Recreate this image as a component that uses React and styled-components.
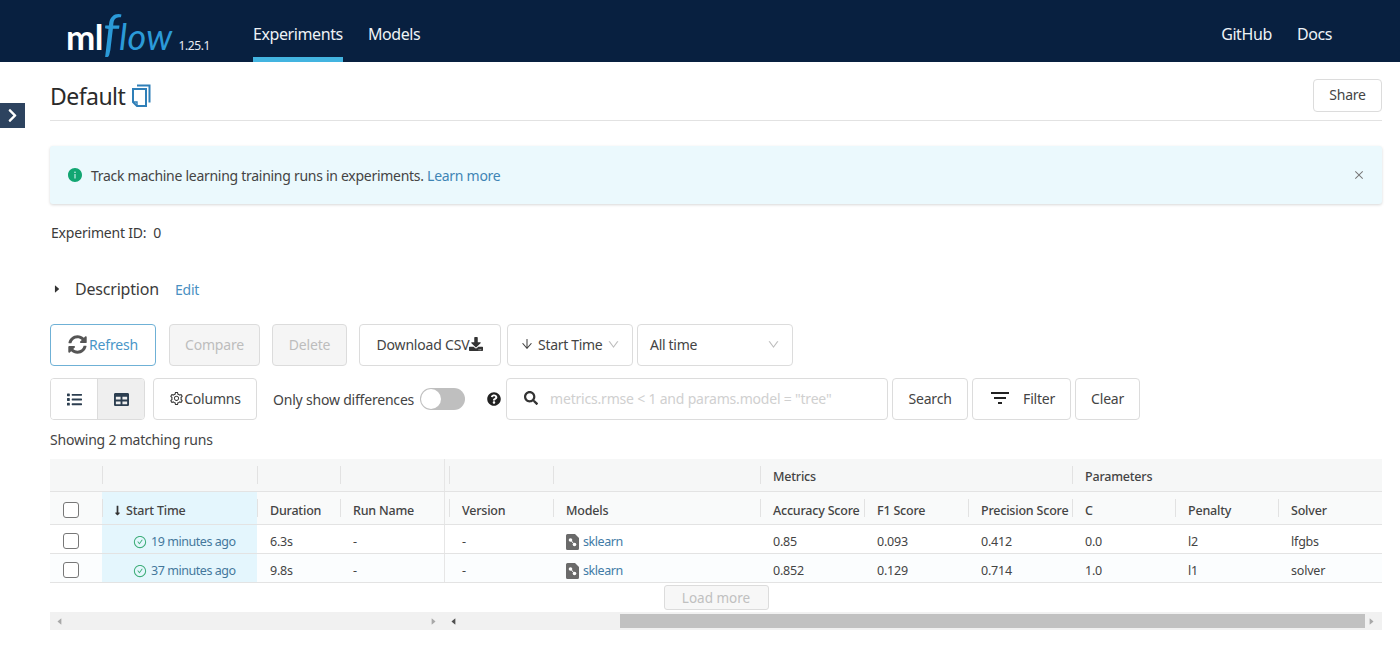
import React from "react";
import styled, { createGlobalStyle } from "styled-components";
import {
  AiFillCaretLeft,
  AiFillCaretRight,
  AiFillInfoCircle,
  AiOutlineArrowDown,
  AiOutlineCheckCircle,
  AiOutlineClose,
  AiOutlineDown,
  AiOutlineSetting,
} from "react-icons/ai";
import {
  FaChevronRight,
  FaDownload,
  FaList,
  FaLongArrowAltDown,
  FaQuestionCircle,
  FaSearch,
  FaSyncAlt,
  FaTable,
} from "react-icons/fa";
import { MdFilterList } from "react-icons/md";

const COLUMNS = "52px 155px 83px 109px 104px 207px 104px 104px 104px 103px 103px 104px";

const GlobalStyle = createGlobalStyle`
  html, body { margin: 0; background: #fff; }
  body {
    font-family: "Noto Sans", "Open Sans", sans-serif;
    font-size: 14px;
    color: #333;
    overflow: hidden;
  }
  * { box-sizing: border-box; }
`;

const Page = styled.div`
  position: relative;
  width: 1400px;
  height: 646px;
  overflow: hidden;
`;

const Header = styled.header`
  height: 62px;
  background: #082040;
  display: flex;
  align-items: stretch;
  padding: 0 67px 0 66px;
  color: #e8edf3;
`;

const Logo = styled.div`
  display: flex;
  align-items: baseline;
  width: 187px;
  padding-top: 1px;
  line-height: 60px;
`;
const LogoMl = styled.span`
  font-family: "Lato", sans-serif;
  font-size: 35px;
  font-weight: 700;
  color: #fff;
  letter-spacing: -0.5px;
`;
const LogoF = styled.span`
  font-family: "Lato", sans-serif;
  font-size: 50px;
  font-style: italic;
  color: #2b9ad8;
`;
const LogoFlow = styled.span`
  font-family: "Lato", sans-serif;
  font-size: 36px;
  font-style: italic;
  color: #2b9ad8;
  letter-spacing: 0.3px;
`;
const Version = styled.span`
  font-size: 12px;
  margin-left: 6px;
  letter-spacing: -0.4px;
`;

const NavItem = styled.a`
  display: flex;
  align-items: center;
  height: 62px;
  padding-top: 11px;
  margin-right: ${(p) => p.$gap || 25}px;
  font-size: 16px;
  letter-spacing: -0.4px;
  color: #eef2f6;
  border-bottom: 5px solid ${(p) => (p.$active ? "#43b4e0" : "transparent")};
`;
const Spacer = styled.div`
  flex: 1;
`;

const SideToggle = styled.button`
  position: absolute;
  left: 0;
  top: 103px;
  width: 25px;
  height: 25px;
  border: 0;
  padding: 0;
  background: #2d435f;
  color: #fff;
  display: flex;
  align-items: center;
  justify-content: center;
  font-size: 15px;
`;

const Main = styled.main`
  padding: 0 18px 0 50px;
`;

const TitleRow = styled.div`
  height: 59px;
  display: flex;
  align-items: flex-end;
  justify-content: space-between;
  padding-bottom: 8px;
  border-bottom: 1px solid #e2e2e2;
`;
const Title = styled.h1`
  margin: 0;
  display: flex;
  align-items: center;
  gap: 6px;
  font-size: 23px;
  font-weight: 400;
  line-height: 32px;
  color: #2a2a2a;
  height: 32px;
  letter-spacing: -0.55px;
`;

const Btn = styled.button`
  height: ${(p) => p.$h || 42}px;
  width: ${(p) => p.$w}px;
  flex: none;
  display: inline-flex;
  align-items: center;
  justify-content: center;
  gap: ${(p) => p.$iconGap || 0}px;
  padding: 0 0 2px;
  font: inherit;
  letter-spacing: -0.2px;
  color: ${(p) => (p.$disabled ? "#bdbdbd" : p.$primary ? "#4a96c8" : "#444")};
  background: ${(p) => (p.$disabled ? "#f5f5f5" : "#fff")};
  border: 1px solid ${(p) => (p.$primary ? "#6fb1d6" : "#dcdcdc")};
  border-radius: 4px;
`;

const Alert = styled.div`
  margin-top: 25px;
  height: 58px;
  display: flex;
  align-items: center;
  padding: 0 17px;
  gap: 8px;
  background: #ebf9fd;
  border-radius: 3px;
  box-shadow: 0 1px 3px rgba(0, 0, 0, 0.16);
  color: #444;
  letter-spacing: -0.28px;
`;
const AlertText = styled.span`
  flex: 1;
`;
const Link = styled.a`
  color: #3f85b5;
`;

const Meta = styled.div`
  margin: 19px 0 0 1px;
  line-height: 20px;
  letter-spacing: -0.2px;
  color: #3b3b3b;
`;

const Description = styled.div`
  margin-top: 34px;
  display: flex;
  align-items: center;
  height: 24px;
  padding-left: 2px;
`;
const DescriptionLabel = styled.span`
  font-size: 16px;
  margin: 0 16px 0 13px;
  letter-spacing: -0.2px;
  color: #3b3b3b;
`;
const EditLink = styled(Link)`
  font-size: 14px;
  color: #4a90c2;
  letter-spacing: -0.2px;
`;

const Toolbar = styled.div`
  display: flex;
  align-items: center;
  margin-top: ${(p) => p.$top}px;
`;
const Gap = styled.div`
  width: ${(p) => p.$w}px;
  flex: none;
`;

const SelectBox = styled.div`
  height: 42px;
  width: ${(p) => p.$w}px;
  flex: none;
  display: flex;
  align-items: center;
  padding: 0 12px 2px;
  gap: 4px;
  border: 1px solid #dcdcdc;
  border-radius: 4px;
  color: #444;
  letter-spacing: -0.3px;
  white-space: nowrap;
`;
const Chevron = styled(AiOutlineDown)`
  margin-left: auto;
  flex: none;
  font-size: 13px;
  color: #bdbdbd;
`;

const ViewToggle = styled.div`
  display: flex;
  width: 95px;
  height: 42px;
  flex: none;
  border: 1px solid #dcdcdc;
  border-radius: 4px;
  overflow: hidden;
`;
const ViewOption = styled.div`
  flex: 1;
  display: flex;
  align-items: center;
  justify-content: center;
  color: #2c3e50;
  font-size: 15px;
  background: ${(p) => (p.$active ? "#efefef" : "#fff")};
  border-left: ${(p) => (p.$active ? "1px solid #dcdcdc" : "0")};
`;

const SwitchLabel = styled.span`
  letter-spacing: -0.2px;
  color: #444;
  white-space: nowrap;
`;
const Switch = styled.div`
  width: 45px;
  height: 22px;
  flex: none;
  border-radius: 11px;
  background: #bfbfbf;
  display: flex;
  align-items: center;
  padding-left: 1px;
`;
const SwitchKnob = styled.div`
  width: 20px;
  height: 20px;
  border-radius: 50%;
  background: #fff;
`;
const HelpIcon = styled(FaQuestionCircle)`
  flex: none;
  color: #222;
  font-size: 14px;
`;

const SearchBox = styled.div`
  width: 382px;
  height: 42px;
  flex: none;
  display: flex;
  align-items: center;
  gap: 12px;
  padding: 0 0 2px 17px;
  border: 1px solid #dcdcdc;
  border-radius: 4px;
  color: #333;
  font-size: 14px;
`;
const Placeholder = styled.span`
  color: #d0d0d0;
  letter-spacing: -0.2px;
  white-space: nowrap;
`;

const Matching = styled.div`
  margin-top: 10px;
  line-height: 20px;
  letter-spacing: -0.2px;
  color: #444;
`;

const Table = styled.div`
  margin-top: 9px;
  width: 1332px;
  font-size: 12.5px;
  letter-spacing: -0.2px;
`;
const Row = styled.div`
  position: relative;
  display: grid;
  grid-template-columns: ${COLUMNS};
  height: ${(p) => p.$h}px;
  background: ${(p) => p.$bg || "#fff"};
  border-bottom: 1px solid #e3e3e3;
`;
const HeadCell = styled.div`
  position: relative;
  display: flex;
  align-items: center;
  gap: 3px;
  padding: ${(p) => (p.$group ? 3 : 5)}px 0 0 ${(p) => (p.$sorted ? 10 : 13)}px;
  font-weight: 500;
  color: #444;
  white-space: nowrap;
  background: ${(p) => (p.$sorted ? "#e4f6fd" : "transparent")};
  &::before {
    content: "";
    display: ${(p) => (p.$plain ? "none" : "block")};
    position: absolute;
    left: 0;
    top: 7px;
    bottom: 7px;
    width: 1px;
    background: #e2e2e2;
  }
`;
const CheckCell = styled.div`
  display: flex;
  align-items: center;
  padding: 3px 0 0 13px;
`;
const Checkbox = styled.div`
  width: 16px;
  height: 16px;
  border: 1px solid #777;
  border-radius: 3px;
  background: #fff;
`;
const Cell = styled.div`
  display: flex;
  align-items: center;
  gap: 4px;
  padding: 5px 0 0 13px;
  white-space: nowrap;
  color: #444;
`;
const TimeCell = styled(Cell)`
  background: #e4f6fd;
  padding-left: 31px;
  color: #44789c;
  letter-spacing: -0.45px;
`;
const OkIcon = styled(AiOutlineCheckCircle)`
  color: #3fae7a;
  font-size: 14px;
`;
const ModelLink = styled(Link)`
  color: #3f7ba6;
  letter-spacing: -0.45px;
`;
const PinnedEdge = styled.div`
  position: absolute;
  left: 394px;
  top: 0;
  bottom: 0;
  width: 1px;
  background: #e6e6e6;
`;

const LoadRow = styled.div`
  height: 29px;
  display: flex;
  justify-content: center;
  align-items: center;
`;
const LoadMore = styled.button`
  width: 105px;
  height: 25px;
  padding: 0;
  font: inherit;
  font-size: 13.5px;
  color: #c0c0c0;
  background: #f7f7f7;
  border: 1px solid #dcdcdc;
  border-radius: 3px;
`;

const Scrollbars = styled.div`
  display: flex;
  height: 18px;
  background: #f1f1f1;
  color: #a0a0a0;
  font-size: 9px;
`;
const ScrollTrack = styled.div`
  width: ${(p) => p.$w}px;
  display: flex;
  align-items: center;
  padding: 0 6px 0 5px;
  justify-content: space-between;
`;
const Thumb = styled.div`
  flex: none;
  width: 745px;
  height: 14px;
  background: #c1c1c1;
  margin-left: 160px;
`;
const TrackArrow = styled.span`
  display: flex;
  color: ${(p) => (p.$dark ? "#505050" : "#a8a8a8")};
`;

const CopyIcon = () => (
  <svg width="20" height="24" viewBox="0 0 20 24" fill="none" stroke="#2f7fb8" strokeWidth="2">
    <path d="M6 1.5h12.5v17" />
    <path d="M2 5h13v17H6l-4-4z" />
    <path d="M2 18h4v4" strokeWidth="1.4" />
  </svg>
);

const ModelIcon = () => (
  <svg width="13" height="16" viewBox="0 0 13 16">
    <path d="M1.5 0H9l4 4v10.5a1.5 1.5 0 0 1-1.5 1.5h-10A1.5 1.5 0 0 1 0 14.5v-13A1.5 1.5 0 0 1 1.5 0z" fill="#6a6a6a" />
    <circle cx="4.5" cy="6" r="1.8" fill="#fff" />
    <circle cx="8.5" cy="10.5" r="1.8" fill="#fff" />
    <path d="M5.5 7l2 2.5" stroke="#fff" strokeWidth="1" />
  </svg>
);

const runs = [
  { time: "19 minutes ago", duration: "6.3s", acc: "0.85", f1: "0.093", precision: "0.412", c: "0.0", penalty: "l2", solver: "lfgbs", bg: "#fff" },
  { time: "37 minutes ago", duration: "9.8s", acc: "0.852", f1: "0.129", precision: "0.714", c: "1.0", penalty: "l1", solver: "solver", bg: "#fbfdfe" },
];

const columnNames = ["Duration", "Run Name", "Version", "Models", "Accuracy Score", "F1 Score", "Precision Score", "C", "Penalty", "Solver"];

const App = () => {
  return (
    <Page>
      <GlobalStyle />
      <Header>
        <Logo>
          <LogoMl>ml</LogoMl>
          <LogoF>f</LogoF>
          <LogoFlow>low</LogoFlow>
          <Version>1.25.1</Version>
        </Logo>
        <NavItem $active>Experiments</NavItem>
        <NavItem>Models</NavItem>
        <Spacer />
        <NavItem>GitHub</NavItem>
        <NavItem $gap={1}>Docs</NavItem>
      </Header>
      <SideToggle>
        <FaChevronRight />
      </SideToggle>
      <Main>
        <TitleRow>
          <Title>
            Default <CopyIcon />
          </Title>
          <Btn $w={69} $h={33}>Share</Btn>
        </TitleRow>
        <Alert>
          <AiFillInfoCircle color="#12a672" size={16} />
          <AlertText>
            Track machine learning training runs in experiments. <Link>Learn more</Link>
          </AlertText>
          <AiOutlineClose color="#777" size={12} />
        </Alert>
        <Meta>Experiment ID:&nbsp;&nbsp;0</Meta>
        <Description>
          <AiFillCaretRight size={10} color="#333" />
          <DescriptionLabel>Description</DescriptionLabel>
          <EditLink>Edit</EditLink>
        </Description>
        <Toolbar $top={23}>
          <Btn $w={106} $primary $iconGap={2}>
            <FaSyncAlt color="#555" size={19} />
            Refresh
          </Btn>
          <Gap $w={13} />
          <Btn $w={91} $disabled>Compare</Btn>
          <Gap $w={12} />
          <Btn $w={75} $disabled>Delete</Btn>
          <Gap $w={12} />
          <Btn $w={142}>
            Download CSV
            <FaDownload color="#333" size={14} />
          </Btn>
          <Gap $w={6} />
          <SelectBox $w={126}>
            <AiOutlineArrowDown size={14} />
            Start Time
            <Chevron />
          </SelectBox>
          <Gap $w={4} />
          <SelectBox $w={156}>
            All time
            <Chevron />
          </SelectBox>
        </Toolbar>
        <Toolbar $top={12}>
          <ViewToggle>
            <ViewOption>
              <FaList />
            </ViewOption>
            <ViewOption $active>
              <FaTable />
            </ViewOption>
          </ViewToggle>
          <Gap $w={8} />
          <Btn $w={104}>
            <AiOutlineSetting color="#333" size={15} />
            Columns
          </Btn>
          <Gap $w={16} />
          <SwitchLabel>Only show differences</SwitchLabel>
          <Gap $w={6} />
          <Switch>
            <SwitchKnob />
          </Switch>
          <Gap $w={22} />
          <HelpIcon />
          <Gap $w={5} />
          <SearchBox>
            <FaSearch />
            <Placeholder>metrics.rmse &lt; 1 and params.model = "tree"</Placeholder>
          </SearchBox>
          <Gap $w={4} />
          <Btn $w={76}>Search</Btn>
          <Gap $w={4} />
          <Btn $w={99} $iconGap={11}>
            <MdFilterList color="#222" size={24} />
            Filter
          </Btn>
          <Gap $w={4} />
          <Btn $w={65}>Clear</Btn>
        </Toolbar>
        <Matching>Showing 2 matching runs</Matching>
        <Table>
          <Row $h={33} $bg="#f6f7f7">
            <HeadCell $group $plain />
            <HeadCell $group />
            <HeadCell $group />
            <HeadCell $group />
            <HeadCell $group />
            <HeadCell $group />
            <HeadCell $group>Metrics</HeadCell>
            <HeadCell $group $plain />
            <HeadCell $group $plain />
            <HeadCell $group>Parameters</HeadCell>
            <HeadCell $group $plain />
            <HeadCell $group $plain />
            <PinnedEdge />
          </Row>
          <Row $h={33} $bg="#f9fafa">
            <CheckCell>
              <Checkbox />
            </CheckCell>
            <HeadCell $sorted>
              <FaLongArrowAltDown size={11} color="#333" />
              Start Time
            </HeadCell>
            {columnNames.map((name) => (
              <HeadCell key={name}>{name}</HeadCell>
            ))}
            <PinnedEdge />
          </Row>
          {runs.map((run) => (
            <Row key={run.time} $h={29} $bg={run.bg}>
              <CheckCell>
                <Checkbox />
              </CheckCell>
              <TimeCell>
                <OkIcon />
                {run.time}
              </TimeCell>
              <Cell>{run.duration}</Cell>
              <Cell>-</Cell>
              <Cell>-</Cell>
              <Cell>
                <ModelIcon />
                <ModelLink>sklearn</ModelLink>
              </Cell>
              <Cell>{run.acc}</Cell>
              <Cell>{run.f1}</Cell>
              <Cell>{run.precision}</Cell>
              <Cell>{run.c}</Cell>
              <Cell>{run.penalty}</Cell>
              <Cell>{run.solver}</Cell>
              <PinnedEdge />
            </Row>
          ))}
          <LoadRow>
            <LoadMore>Load more</LoadMore>
          </LoadRow>
          <Scrollbars>
            <ScrollTrack $w={394}>
              <TrackArrow><AiFillCaretLeft /></TrackArrow>
              <TrackArrow><AiFillCaretRight /></TrackArrow>
            </ScrollTrack>
            <ScrollTrack $w={938}>
              <TrackArrow $dark><AiFillCaretLeft /></TrackArrow>
              <Thumb />
              <TrackArrow><AiFillCaretRight /></TrackArrow>
            </ScrollTrack>
          </Scrollbars>
        </Table>
      </Main>
    </Page>
  );
};

export default App;
